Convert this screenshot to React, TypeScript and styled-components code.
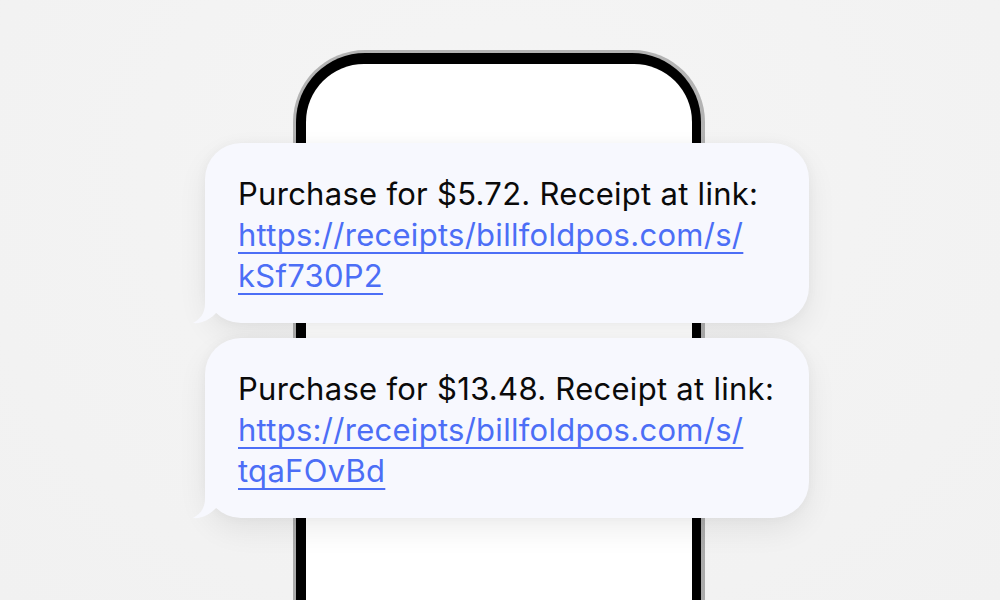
import React from "react";
import styled, { createGlobalStyle } from "styled-components";

const Global = createGlobalStyle`
  html, body { margin: 0; padding: 0; background: #f3f3f3; }
  body { font-family: "Inter", "Noto Sans", sans-serif; }
`;

const Stage = styled.main`
  width: 1000px;
  height: 600px;
  overflow: hidden;
  display: grid;
  grid-template: 1fr / 1fr;
  background: radial-gradient(ellipse at 50% 30%, #f5f5f5 0%, #f1f1f1 100%);
`;

const Phone = styled.div`
  grid-area: 1 / 1;
  align-self: start;
  justify-self: start;
  margin: 50px 0 0 293px;
  width: 412px;
  height: 640px;
  box-sizing: border-box;
  padding: 3px 4px 0 3px;
  border-radius: 72px;
  background: linear-gradient(180deg, #b4b4b4, #a9a9a9);
`;

const Bezel = styled.div`
  height: 100%;
  box-sizing: border-box;
  padding: 11px 9px 0 10px;
  border-radius: 69px;
  background: #000;
`;

const Screen = styled.div`
  height: 100%;
  border-radius: 58px;
  background: #ffffff;
`;

const Thread = styled.section`
  grid-area: 1 / 1;
  align-self: start;
  justify-self: start;
  margin: 143px 0 0 205px;
  display: flex;
  flex-direction: column;
  gap: 15px;
`;

const Bubble = styled.div`
  position: relative;
  width: 604px;
  height: 180px;
  box-sizing: border-box;
  padding: 30px 20px 0 33px;
  border-radius: 36px;
  background: #f7f8fe;
  box-shadow: 0 12px 30px rgba(0, 0, 0, 0.07), 0 0 12px rgba(0, 0, 0, 0.035);
`;

const Tail = styled.svg`
  position: absolute;
  left: -12px;
  bottom: 0;
  width: 40px;
  height: 44px;
  overflow: visible;
`;

const Message = styled.p`
  position: relative;
  margin: 0;
  white-space: nowrap;
  font-family: "Inter", "Noto Sans", sans-serif;
  font-size: 31px;
  line-height: 41px;
  color: #0a0a0a;
  letter-spacing: 0.28px;
`;

const Link = styled.a`
  color: #4c6ef6;
  text-decoration: underline;
  text-decoration-thickness: 2px;
  text-underline-offset: 6px;
`;

const messages = [
  { amount: "$5.72", code: "kSf730P2" },
  { amount: "$13.48", code: "tqaFOvBd" },
];

export default function App() {
  return (
    <>
      <Global />
      <Stage>
        <Phone>
          <Bezel>
            <Screen />
          </Bezel>
        </Phone>
        <Thread>
          {messages.map((m) => (
            <Bubble key={m.code}>
              <Tail viewBox="0 0 40 44">
                <path
                  d="M12 0 L12 24 C12 35 7 40 0 44 C9 45 18 40 24 33 L40 20 L40 0 Z"
                  fill="#f7f8fe"
                />
              </Tail>
              <Message>
                Purchase for {m.amount}. Receipt at link:
                <br />
                <Link href="#">
                  https://receipts/billfoldpos.com/s/
                  <br />
                  {m.code}
                </Link>
              </Message>
            </Bubble>
          ))}
        </Thread>
      </Stage>
    </>
  );
}
